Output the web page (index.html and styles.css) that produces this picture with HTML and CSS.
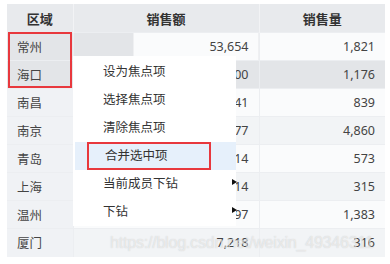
FILE: index.html
```html
<!DOCTYPE html>
<html lang="zh-CN">
<head>
  <meta charset="utf-8">
  <title>销售表</title>
  <link rel="stylesheet" href="styles.css">
</head>
<body>
  <div class="sheet">
    <table class="grid">
      <colgroup>
        <col class="c-area"><col class="c-amount"><col class="c-qty">
      </colgroup>
      <thead>
        <tr><th>区域</th><th>销售额</th><th>销售量</th></tr>
      </thead>
      <tbody>
        <tr class="sel hover"><td class="dim">常州</td><td class="num">53,654</td><td class="num">1,821</td></tr>
        <tr class="sel"><td class="dim">海口</td><td class="num">43,200</td><td class="num">1,176</td></tr>
        <tr><td class="dim">南昌</td><td class="num">24,341</td><td class="num">839</td></tr>
        <tr class="odd"><td class="dim">南京</td><td class="num">97,177</td><td class="num">4,860</td></tr>
        <tr><td class="dim">青岛</td><td class="num">18,014</td><td class="num">573</td></tr>
        <tr class="odd"><td class="dim">上海</td><td class="num">10,514</td><td class="num">315</td></tr>
        <tr><td class="dim">温州</td><td class="num">40,297</td><td class="num">1,383</td></tr>
        <tr class="odd"><td class="dim">厦门</td><td class="num">7,218</td><td class="num">316</td></tr>
      </tbody>
    </table>

    <!-- 选中框 -->
    <div class="pick-box"></div>

    <!-- 右键菜单 -->
    <ul class="ctx-menu">
      <li>设为焦点项</li>
      <li>选择焦点项</li>
      <li>清除焦点项</li>
      <li class="active"><span class="mark">合并选中项</span></li>
      <li class="sub">当前成员下钻</li>
      <li class="sub">下钻</li>
    </ul>

    <div class="watermark">https://blog.csdn.net/weixin_49346311</div>
  </div>
</body>
</html>
```
FILE: styles.css
```css
html, body {
  margin: 0; padding: 0;
  background: #fff;
  font-family: "Noto Sans", "Noto Sans CJK SC", sans-serif;
  color: #333;
}
body {
  width: 390px; height: 264px;
  overflow: hidden;
}
.sheet {
  position: relative;
  padding: 4px 5px 0 7px;
}
.grid {
  border-collapse: collapse;
  table-layout: fixed;
  width: 378px;
  font-size: 12.5px;
}
.c-area { width: 66px; }
.c-amount { width: 186px; }
.c-qty { width: 126px; }
.grid th {
  height: 28px;
  padding: 0;
  background: #e8eaed;
  font-weight: 700;
  font-size: 13px;
  color: #333;
  border-right: 1px solid #f2f3f5;
}
.grid td {
  height: 28px;
  padding: 0 10px;
  background: #fafbfc;
  border-right: 1px solid #eceef1;
  border-top: 1px solid #eceef1;
  box-sizing: border-box;
  color: #444;
}
.grid th:last-child, .grid td:last-child { border-right: none; }
.grid td.dim { background: #f0f2f5; }
.grid td.num { text-align: right; }
.grid tr.odd td { background: #f2f4f6; }
.grid tr.odd td.dim { background: #f0f2f5; }
.grid tr.sel td { background: #e3e5e8; }
.grid tr.sel.hover td { background: #fafbfc; }
.grid tr.sel.hover td.dim { background: #e3e5e8; }
.grid tr.sel.hover td:nth-child(2) {
  background: linear-gradient(to right, #e3e5e8 60px, #fafbfc 60px);
}
.pick-box {
  position: absolute;
  left: 8px; top: 32px;
  width: 64px; height: 56px;
  border: 2px solid #e8383d;
  box-sizing: border-box;
}
.ctx-menu {
  position: absolute;
  left: 73px; top: 56px;
  width: 163px;
  margin: 0; padding: 2px 0 0 2px;
  list-style: none;
  background: #fff;
  box-sizing: border-box;
  font-size: 12.5px;
  color: #333;
}
.ctx-menu li {
  position: relative;
  height: 28px;
  line-height: 28px;
  padding-left: 28px;
}
.ctx-menu li.active {
  background: #e6f0fb;
  padding-left: 12px;
}
.ctx-menu li .mark {
  display: block;
  width: 124px; height: 28px;
  padding-left: 16px;
  border: 2px solid #e8383d;
  box-sizing: border-box;
  line-height: 24px;
}
.ctx-menu li.sub::after {
  content: "";
  position: absolute;
  left: 157px; top: 9px;
  border-left: 5px solid #111;
  border-top: 3.5px solid transparent;
  border-bottom: 3.5px solid transparent;
}
.watermark {
  position: absolute;
  left: 110px; top: 234px;
  font-family: "Liberation Sans", Arial, sans-serif;
  font-size: 16px;
  color: rgba(255, 255, 255, 0.55);
  text-shadow: 0 0 1px rgba(120, 120, 120, 0.35);
  white-space: nowrap;
  letter-spacing: -0.2px;
}
```
